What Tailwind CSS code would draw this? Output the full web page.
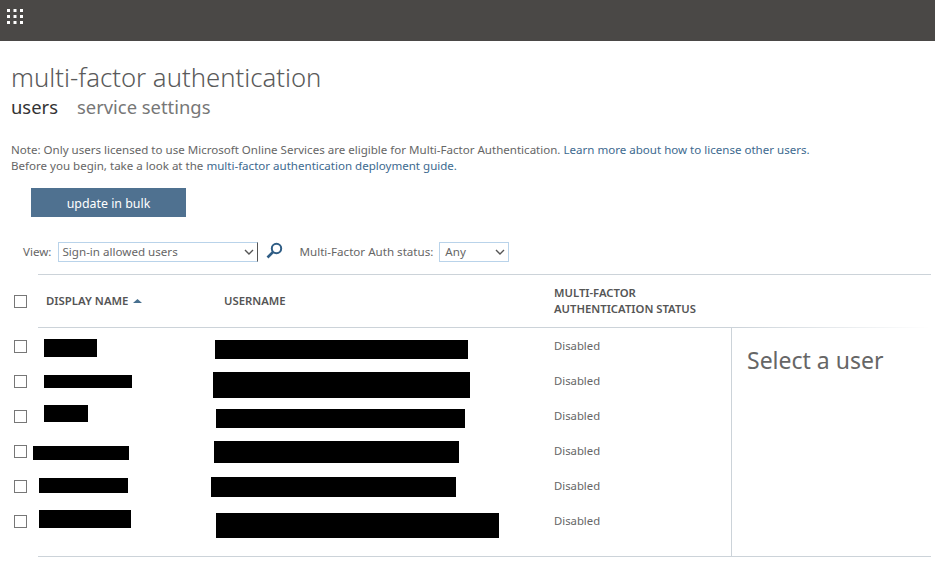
<!DOCTYPE html>
<html lang="en">
  <head>
    <meta charset="UTF-8" />
    <title>multi-factor authentication</title>
    <script src="https://cdn.jsdelivr.net/npm/@tailwindcss/browser@4"></script>
  </head>
  <body class="bg-white h-[582px] overflow-hidden font-['Noto_Sans',sans-serif] text-[#666]">
    <!-- top bar -->
    <div class="h-[41px] bg-[#4a4846] flex items-start pl-[7px] pt-[9px]">
      <svg width="16" height="15" viewBox="0 0 16 15" fill="#fff">
        <rect x="0" y="0" width="3" height="3" /><rect x="6.5" y="0" width="3" height="3" /><rect x="13" y="0" width="3" height="3" />
        <rect x="0" y="6" width="3" height="3" /><rect x="6.5" y="6" width="3" height="3" /><rect x="13" y="6" width="3" height="3" />
        <rect x="0" y="12" width="3" height="3" /><rect x="6.5" y="12" width="3" height="3" /><rect x="13" y="12" width="3" height="3" />
      </svg>
    </div>

    <h1 class="pl-[11px] pt-[20px] text-[25.7px] leading-[34px] font-light text-[#5a5a5a]">multi-factor authentication</h1>
    <div class="pl-[11px] mt-[-1px] flex gap-[19px] text-[18.4px] leading-[26px] text-[#777]">
      <span class="text-[#333]">users</span>
      <span>service settings</span>
    </div>

    <div class="pl-[11px] mt-[22px] text-[11.55px] leading-[16px] whitespace-nowrap">
      <p>Note: Only users licensed to use Microsoft Online Services are eligible for Multi-Factor Authentication. <a class="text-[#3d6a8f]">Learn more about how to license other users.</a></p>
      <p>Before you begin, take a look at the <a class="text-[#3d6a8f]">multi-factor authentication deployment guide.</a></p>
    </div>

    <button class="ml-[31px] mt-[14px] w-[155px] h-[29px] pt-[3px] bg-[#4f7190] text-white text-[12.4px] block">update in bulk</button>

    <!-- filters -->
    <div class="flex items-center h-[20px] mt-[25px] pl-[23px] text-[11.6px]">
      <span>View:</span>
      <div class="ml-[7px] w-[200px] h-[20px] border border-[#b9d3ea] border-r-[#555] flex items-center justify-between pl-[3px] pr-[2px]">
        <span>Sign-in allowed users</span>
        <svg width="12" height="8" viewBox="0 0 12 8" fill="none" stroke="#555" stroke-width="1.4"><path d="M2 2l4 4 4-4" /></svg>
      </div>
      <svg class="ml-[8px] mb-[4px]" width="17" height="17" viewBox="0 0 17 17" fill="none">
        <circle cx="10.5" cy="6.5" r="4.7" stroke="#2f5d85" stroke-width="2" />
        <path d="M7 10L1.5 15.5" stroke="#2f5d85" stroke-width="2.6" />
      </svg>
      <span class="ml-[16px]">Multi-Factor Auth status:</span>
      <div class="ml-[6px] w-[70px] h-[20px] border border-[#b9d3ea] flex items-center justify-between pl-[5px] pr-[2px]">
        <span>Any</span>
        <svg width="12" height="8" viewBox="0 0 12 8" fill="none" stroke="#555" stroke-width="1.4"><path d="M2 2l4 4 4-4" /></svg>
      </div>
    </div>

    <!-- table -->
    <div class="mt-[12px]">
      <div class="ml-[38px] mr-[4px] border-t border-[#ccd3d9]"></div>
      <div class="flex h-[52px] items-center text-[11.3px] font-semibold text-[#555]">
        <span class="ml-[14px] w-[13px] h-[13px] border border-[#777] shrink-0"></span>
        <span class="ml-[19px] w-[178px] flex items-center gap-[5px] text-[11.4px]">DISPLAY NAME
          <svg width="9" height="4" viewBox="0 0 9 4" fill="#48708f"><path d="M0 4L4.5 0L9 4Z" /></svg>
        </span>
        <span class="w-[330px]">USERNAME</span>
        <span class="leading-[16px]">MULTI-FACTOR<br />AUTHENTICATION STATUS</span>
      </div>
      <div class="ml-[38px] h-px bg-[linear-gradient(to_right,#ccd3d9_78%,#fff_100%)] mr-[4px]"></div>

      <div class="flex">
        <div class="w-[731px] h-[228px] text-[11.3px]">
          <div class="flex h-[35px] items-start">
            <span class="ml-[14px] mt-[12px] w-[13px] h-[13px] border border-[#777] shrink-0"></span>
            <div class="w-[188px] shrink-0"><div class="ml-[17px] mt-[11px] w-[53px] h-[18px] bg-black"></div></div>
            <div class="w-[339px] shrink-0"><div class="mt-[12px] w-[253px] h-[19px] bg-black"></div></div>
            <span class="mt-[10px]">Disabled</span>
          </div>
          <div class="flex h-[35px] items-start">
            <span class="ml-[14px] mt-[12px] w-[13px] h-[13px] border border-[#777] shrink-0"></span>
            <div class="w-[186px] shrink-0"><div class="ml-[17px] mt-[12px] w-[88px] h-[13px] bg-black"></div></div>
            <div class="w-[341px] shrink-0"><div class="mt-[9px] w-[257px] h-[26px] bg-black"></div></div>
            <span class="mt-[10px]">Disabled</span>
          </div>
          <div class="flex h-[35px] items-start">
            <span class="ml-[14px] mt-[12px] w-[13px] h-[13px] border border-[#777] shrink-0"></span>
            <div class="w-[189px] shrink-0"><div class="ml-[17px] mt-[7px] w-[44px] h-[17px] bg-black"></div></div>
            <div class="w-[338px] shrink-0"><div class="mt-[11px] w-[249px] h-[19px] bg-black"></div></div>
            <span class="mt-[10px]">Disabled</span>
          </div>
          <div class="flex h-[35px] items-start">
            <span class="ml-[14px] mt-[12px] w-[13px] h-[13px] border border-[#777] shrink-0"></span>
            <div class="w-[187px] shrink-0"><div class="ml-[6px] mt-[13px] w-[96px] h-[14px] bg-black"></div></div>
            <div class="w-[340px] shrink-0"><div class="mt-[8px] w-[245px] h-[22px] bg-black"></div></div>
            <span class="mt-[10px]">Disabled</span>
          </div>
          <div class="flex h-[35px] items-start">
            <span class="ml-[14px] mt-[12px] w-[13px] h-[13px] border border-[#777] shrink-0"></span>
            <div class="w-[184px] shrink-0"><div class="ml-[12px] mt-[10px] w-[89px] h-[15px] bg-black"></div></div>
            <div class="w-[343px] shrink-0"><div class="mt-[9px] w-[245px] h-[20px] bg-black"></div></div>
            <span class="mt-[10px]">Disabled</span>
          </div>
          <div class="flex h-[35px] items-start">
            <span class="ml-[14px] mt-[12px] w-[13px] h-[13px] border border-[#777] shrink-0"></span>
            <div class="w-[189px] shrink-0"><div class="ml-[12px] mt-[7px] w-[92px] h-[18px] bg-black"></div></div>
            <div class="w-[338px] shrink-0"><div class="mt-[10px] w-[283px] h-[25px] bg-black"></div></div>
            <span class="mt-[10px]">Disabled</span>
          </div>
        </div>
        <div class="w-[200px] h-[228px] border-l border-[#ccd3d9] pl-[15px] pt-[15px] text-[23px] leading-[34px]">Select a user</div>
      </div>
      <div class="ml-[38px] mr-[4px] border-t border-[#ccd3d9]"></div>
    </div>
  </body>
</html>
